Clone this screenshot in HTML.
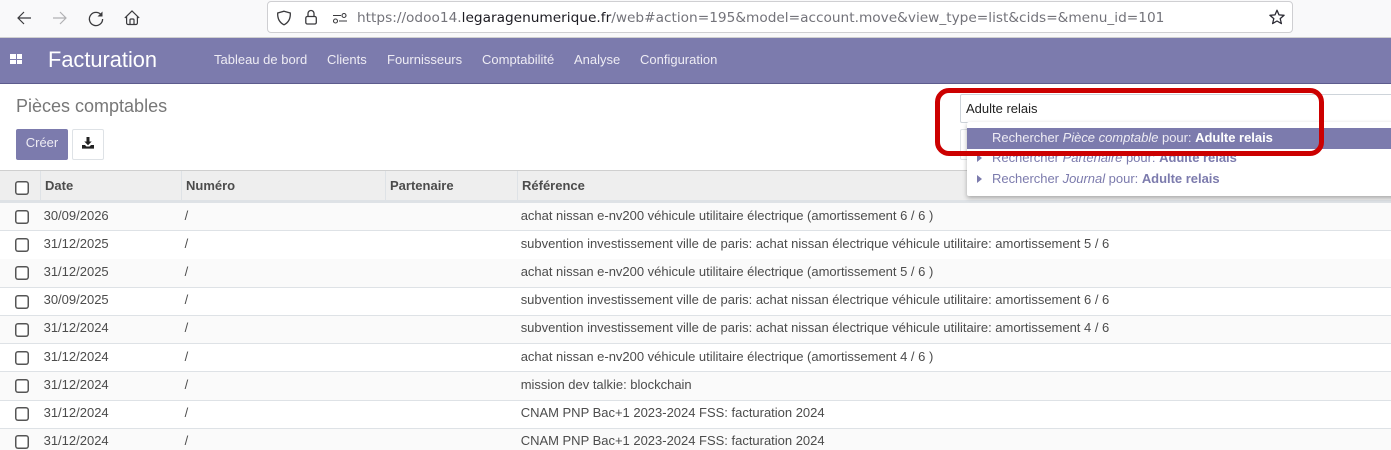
<!DOCTYPE html>
<html lang="fr"><head><meta charset="utf-8"><title>Pièces comptables</title>
<style>
html,body{margin:0;padding:0;background:#fff;width:1391px;height:450px;overflow:hidden}
#w{position:relative;width:1391px;height:450px;overflow:hidden;font-family:"Liberation Sans",sans-serif;color:#4c4c4c}
.a{position:absolute;white-space:nowrap}
svg{position:absolute;overflow:visible}
.m{top:52px;font-size:13px;line-height:15px;color:#eeecf4}
.th{top:171px;height:29px;line-height:29px;font-size:13px;font-weight:bold;color:#4c4c4c}
.cb{position:absolute;left:15px;width:14px;height:14px;box-shadow:inset 0 0 0 1.5px #555;border-radius:3px;background:#fff}
.row{position:absolute;left:0;width:1391px;height:28px;border-bottom:1px solid #dee2e6;font-size:13px;color:#4c4c4c}
.row.o{background:#fafafa}
.row span{position:absolute;top:5px;line-height:15px;white-space:nowrap}
.row span:nth-of-type(3){letter-spacing:-.01px}
.row.u span{top:4px}
.row .cb{top:7px}
.s{left:992px;font-size:13px;line-height:15px;color:#7c7bad;letter-spacing:-.02px}
.s b{font-weight:bold}
</style></head><body><div id="w">

<div class="a" style="left:0;top:0;width:1391px;height:37px;background:#f9f9fa"></div>
<div class="a" style="left:0;top:37px;width:1391px;height:1px;background:#d0d0d0"></div>

<svg style="left:16px;top:10px" width="16" height="16" viewBox="0 0 16 16" fill="none" stroke="#3a3a3d" stroke-width="1.2"><path d="M15 8H2M8 2 2 8l6 6"/></svg>
<svg style="left:52px;top:10px" width="16" height="16" viewBox="0 0 16 16" fill="none" stroke="#b1b1b3" stroke-width="1.2"><path d="M1 8h13M8 2l6 6-6 6"/></svg>
<svg style="left:88px;top:10px" width="16" height="16" viewBox="0 0 16 16" fill="none" stroke="#3a3a3d" stroke-width="1.3"><path d="M13.6 5.5A6.6 6.6 0 1 0 14.6 9"/><path d="M14.5 1.5v5h-5z" fill="#3a3a3d" stroke="none"/></svg>
<svg style="left:124px;top:10px" width="16" height="16" viewBox="0 0 16 16" fill="none" stroke="#3a3a3d" stroke-width="1.2"><path d="M.8 8 8 1l7.2 7M2.6 6.6V13a1.5 1.5 0 0 0 1.5 1.5h7.8a1.5 1.5 0 0 0 1.5-1.5V6.6"/><path d="M6 14.5V10a1 1 0 0 1 1-1h2a1 1 0 0 1 1 1v4.5"/></svg>

<div class="a" style="left:267px;top:1px;width:1024px;height:30px;background:#fff;border:1px solid #cfcfd2;border-radius:4px"></div>
<svg style="left:276px;top:10px" width="16" height="16" viewBox="0 0 16 16" fill="none" stroke="#3a3a3d" stroke-width="1.3"><path d="M8 1.2 14.3 3c.3 5.5-1.7 9.5-6.3 11.8C3.4 12.5 1.4 8.5 1.7 3z"/></svg>
<svg style="left:303px;top:9px" width="16" height="16" viewBox="0 0 16 16" fill="none" stroke="#3a3a3d" stroke-width="1.3"><rect x="2.8" y="7.5" width="10.5" height="7.5" rx="1.5"/><path d="M5 7.5V4.5a3 3 0 0 1 6 0v3"/></svg>
<svg style="left:332px;top:11px" width="16" height="14" viewBox="0 0 16 14" fill="none" stroke="#3a3a3d" stroke-width="1.1"><path d="M1 4.5h8M7 10h8"/><circle cx="12" cy="4.5" r="2"/><circle cx="3.5" cy="10" r="2"/></svg>
<div class="a" style="left:357px;top:8px;font-family:'DejaVu Sans',sans-serif;font-size:13.7px;line-height:20px;color:#73737a">https://odoo14.<span style="color:#1c1b22">legaragenumerique.fr</span>/web#action=195&amp;model=account.move&amp;view_type=list&amp;cids=&amp;menu_id=101</div>
<svg style="left:1269px;top:9px" width="16" height="16" viewBox="0 0 16 16" fill="none" stroke="#2b2a33" stroke-width="1.3" stroke-linejoin="round"><path d="M8 1.2 10 5.9l5.1.4-3.9 3.3 1.2 5L8 12l-4.4 2.6 1.2-5L.9 6.3 6 5.9z"/></svg>

<div class="a" style="left:0;top:38px;width:1391px;height:45px;background:#7c7bad"></div>
<div class="a" style="left:0;top:83px;width:1391px;height:1px;background:#5d5c8d"></div>
<div class="a" style="left:10px;top:54px;width:5.5px;height:4.5px;background:#fff"></div>
<div class="a" style="left:16.5px;top:54px;width:5.5px;height:4.5px;background:#fff"></div>
<div class="a" style="left:10px;top:59.5px;width:5.5px;height:4.5px;background:#fff"></div>
<div class="a" style="left:16.5px;top:59.5px;width:5.5px;height:4.5px;background:#fff"></div>
<div class="a" style="left:48px;top:47px;font-size:21.8px;line-height:26px;color:#fff">Facturation</div>
<div class="a m" style="left:214px">Tableau de bord</div>
<div class="a m" style="left:327px">Clients</div>
<div class="a m" style="left:387px">Fournisseurs</div>
<div class="a m" style="left:482px">Comptabilité</div>
<div class="a m" style="left:574px">Analyse</div>
<div class="a m" style="left:640px">Configuration</div>

<div class="a" style="left:16px;top:95px;font-size:18px;line-height:22px;color:#777">Pièces comptables</div>
<div class="a" style="left:16px;top:129px;width:52px;height:31px;background:#7c7bad;border-radius:2px;color:#eeecf4;font-size:13px;line-height:27px;text-align:center">Créer</div>
<div class="a" style="left:72px;top:129px;width:30px;height:29px;border:1px solid #dee2e6;border-radius:2px;background:#fff"></div>
<svg style="left:82px;top:137px" width="12" height="12" viewBox="0 0 12 12" fill="#222"><path d="M4.5 0h3v4.5h2.2L6 8.3 2.3 4.5h2.2z"/><path d="M0 8h3l1.5 1.5h3L9 8h3v3.6H0z"/></svg>

<div class="a" style="left:0;top:170px;width:1391px;height:1px;background:#cfcfcf"></div>
<div class="a" style="left:0;top:171px;width:1391px;height:29px;background:#eeeeee"></div>
<div class="a" style="left:0;top:200px;width:1391px;height:3px;background:#dee2e6"></div>
<div class="a" style="left:40px;top:171px;width:1px;height:29px;background:#dee2e6"></div>
<div class="a" style="left:181px;top:171px;width:1px;height:29px;background:#dee2e6"></div>
<div class="a" style="left:385px;top:171px;width:1px;height:29px;background:#dee2e6"></div>
<div class="a" style="left:517px;top:171px;width:1px;height:29px;background:#dee2e6"></div>
<div class="cb" style="top:181px"></div>
<div class="a th" style="left:45px">Date</div>
<div class="a th" style="left:186px">Numéro</div>
<div class="a th" style="left:390px">Partenaire</div>
<div class="a th" style="left:522px">Référence</div>

<div class="row o" style="top:203px;height:27px"><i class="cb"></i><span style="left:43.6px">30/09/2026</span><span style="left:184.6px">/</span><span style="left:520.7px">achat nissan e-nv200 véhicule utilitaire électrique (amortissement 6 / 6 )</span></div>
<div class="row" style="top:231px"><i class="cb"></i><span style="left:43.6px">31/12/2025</span><span style="left:184.6px">/</span><span style="left:520.7px">subvention investissement ville de paris: achat nissan électrique véhicule utilitaire: amortissement 5 / 6</span></div>
<div class="row o" style="top:259px"><i class="cb"></i><span style="left:43.6px">31/12/2025</span><span style="left:184.6px">/</span><span style="left:520.7px">achat nissan e-nv200 véhicule utilitaire électrique (amortissement 5 / 6 )</span></div>
<div class="row u" style="top:288px;height:27px"><i class="cb"></i><span style="left:43.6px">30/09/2025</span><span style="left:184.6px">/</span><span style="left:520.7px">subvention investissement ville de paris: achat nissan électrique véhicule utilitaire: amortissement 6 / 6</span></div>
<div class="row o u" style="top:316px;height:27px"><i class="cb"></i><span style="left:43.6px">31/12/2024</span><span style="left:184.6px">/</span><span style="left:520.7px">subvention investissement ville de paris: achat nissan électrique véhicule utilitaire: amortissement 4 / 6</span></div>
<div class="row" style="top:344px;height:27px"><i class="cb"></i><span style="left:43.6px">31/12/2024</span><span style="left:184.6px">/</span><span style="left:520.7px">achat nissan e-nv200 véhicule utilitaire électrique (amortissement 4 / 6 )</span></div>
<div class="row o" style="top:372px"><i class="cb"></i><span style="left:43.6px">31/12/2024</span><span style="left:184.6px">/</span><span style="left:520.7px">mission dev talkie: blockchain</span></div>
<div class="row u" style="top:401px;height:27px"><i class="cb" style="top:6px"></i><span style="left:43.6px">31/12/2024</span><span style="left:184.6px">/</span><span style="left:520.7px">CNAM PNP Bac+1 2023-2024 FSS: facturation 2024</span></div>
<div class="row o u" style="top:429px;height:21px;border-bottom:0"><i class="cb" style="top:6px"></i><span style="left:43.6px">31/12/2024</span><span style="left:184.6px">/</span><span style="left:520.7px">CNAM PNP Bac+1 2023-2024 FSS: facturation 2024</span></div>

<div class="a" style="left:960px;top:94px;width:440px;height:27px;border:1px solid #ced4da;border-radius:2px;background:#fff"></div>
<div class="a" style="left:966px;top:101px;font-size:13px;line-height:16px;color:#222">Adulte relais</div>
<div class="a" style="left:960px;top:129px;width:20px;height:29px;border:1px solid #dee2e6;border-radius:2px;background:#fff"></div>
<div class="a" style="left:967px;top:122px;width:430px;height:74px;background:#fff;border-radius:2px;box-shadow:0 2px 5px rgba(0,0,0,.3)"></div>
<div class="a" style="left:967px;top:128px;width:424px;height:21px;background:#7c7bad"></div>
<div class="a s" style="top:130px;color:#eeecf4">Rechercher <em>Pièce comptable</em> pour: <b style="color:#fff">Adulte relais</b></div>
<div class="a s" style="top:150px">Rechercher <em>Partenaire</em> pour: <b>Adulte relais</b></div>
<div class="a s" style="top:171px">Rechercher <em>Journal</em> pour: <b>Adulte relais</b></div>
<svg style="left:977px;top:154px" width="5" height="8" viewBox="0 0 5 8" fill="#7c7bad"><path d="M0 0 5 4 0 8z"/></svg>
<svg style="left:977px;top:175px" width="5" height="8" viewBox="0 0 5 8" fill="#7c7bad"><path d="M0 0 5 4 0 8z"/></svg>

<div class="a" style="left:935px;top:88px;width:379px;height:58px;border:5px solid #cc0000;border-radius:14px"></div>
</div></body></html>
